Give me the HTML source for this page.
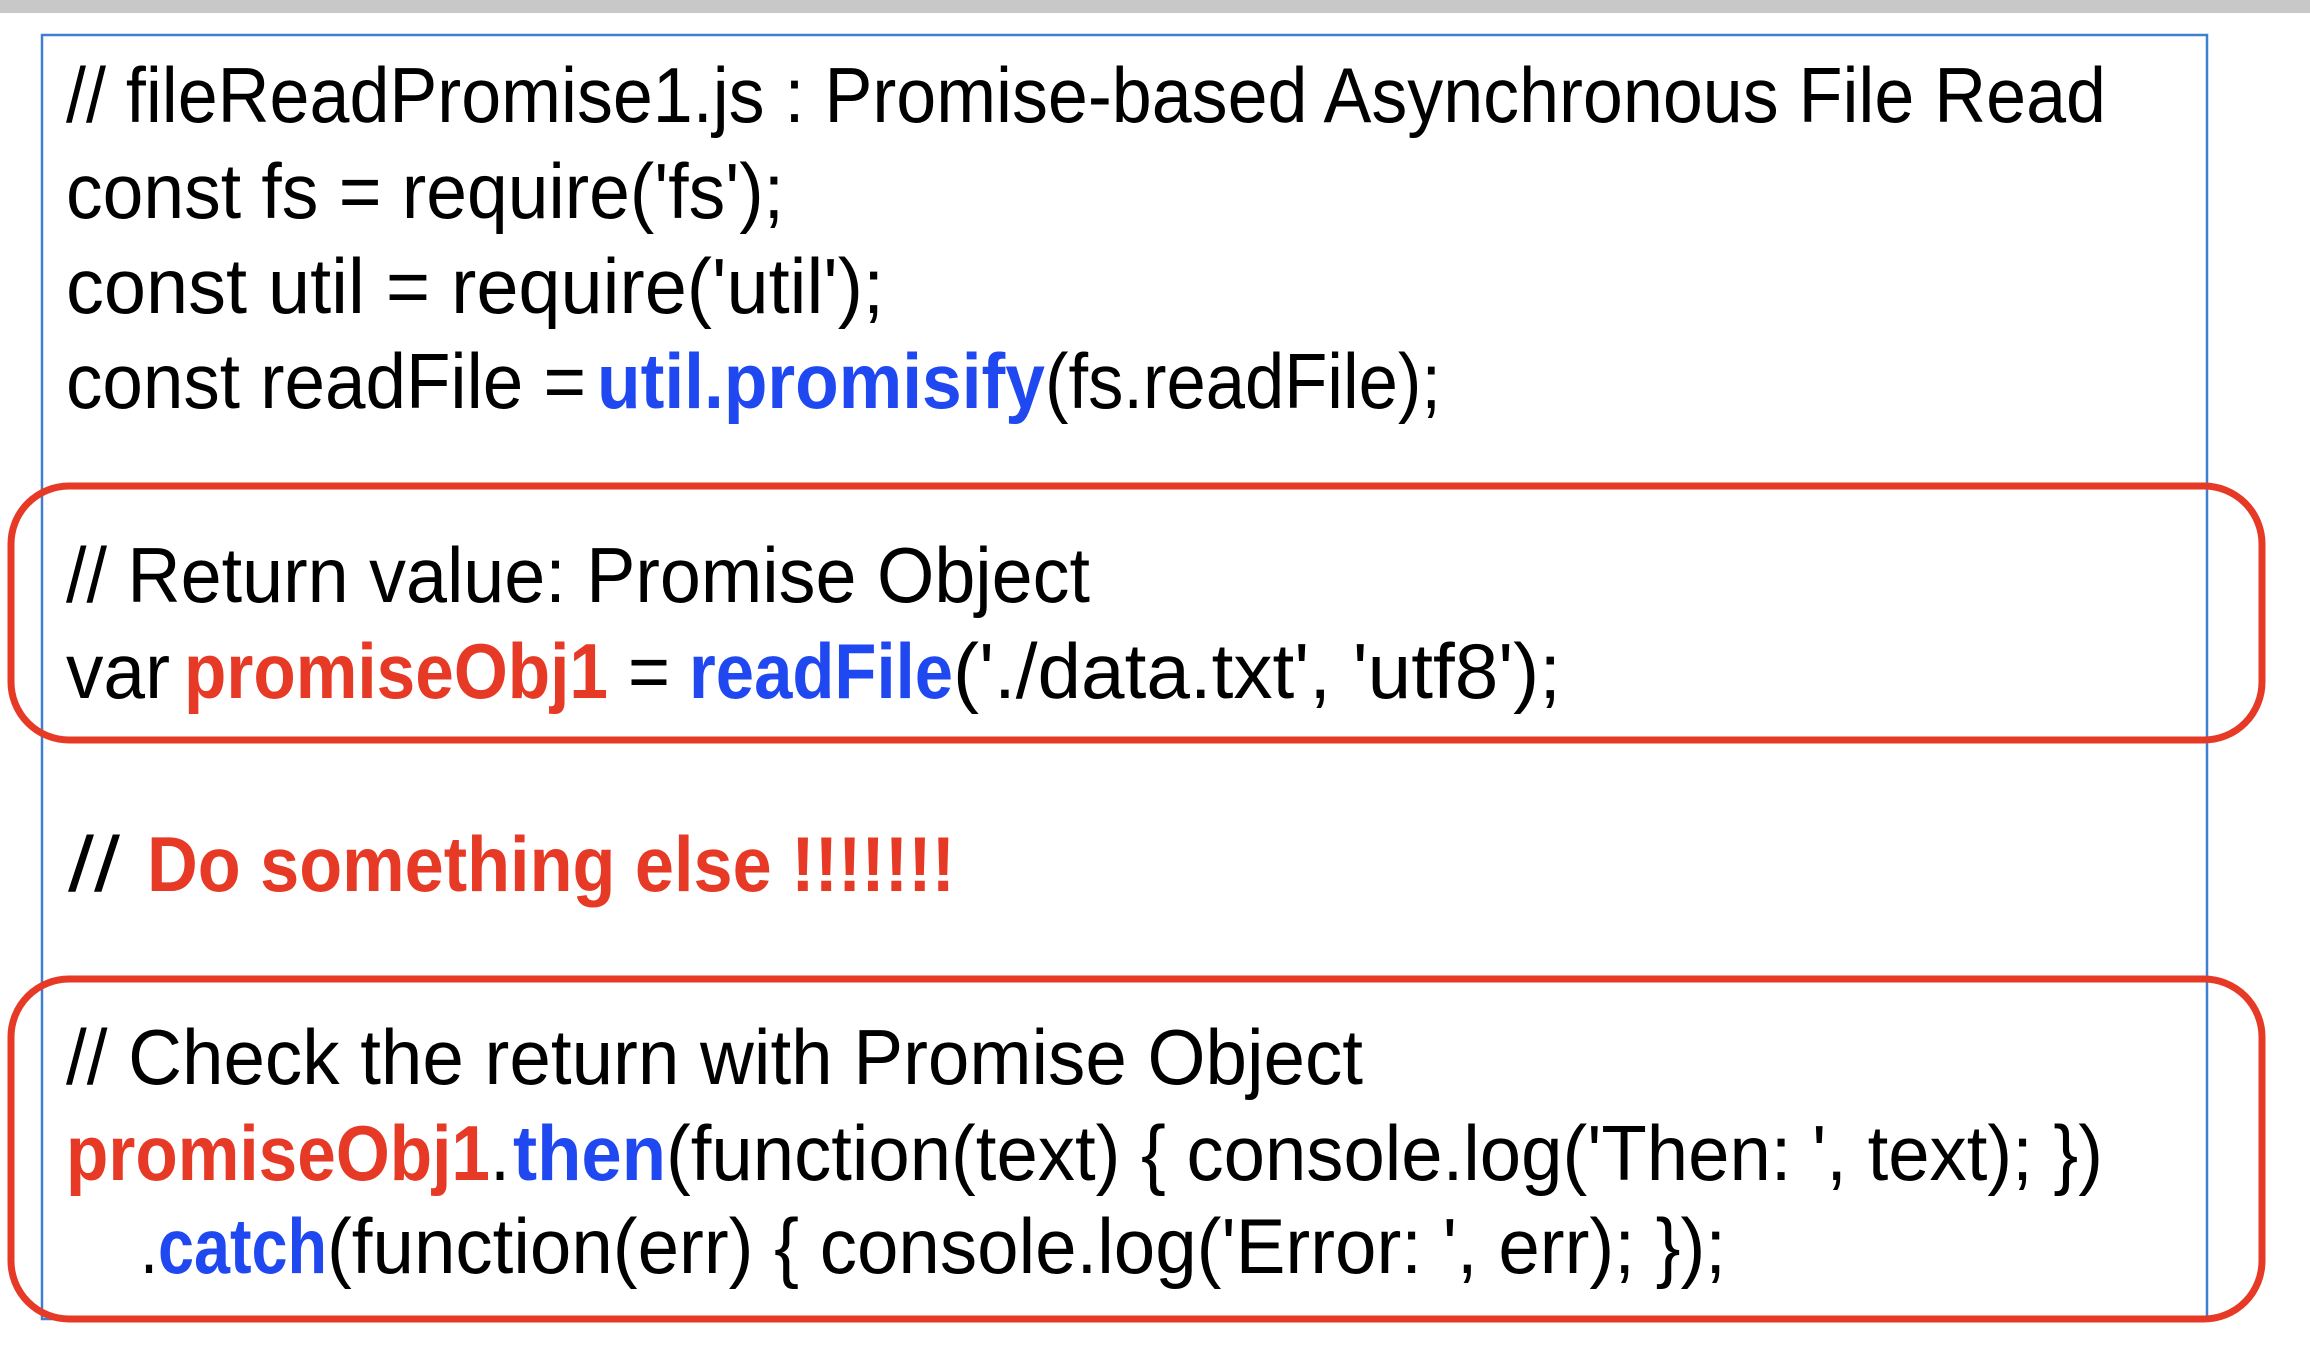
<!DOCTYPE html>
<html><head><meta charset="utf-8"><style>
html,body{margin:0;padding:0;background:#fff;width:2310px;height:1352px;overflow:hidden}
svg{display:block}
text{font-family:"Liberation Sans",sans-serif;font-size:78px;fill:#000}
.b{fill:#1f48f0;font-weight:bold}
.r{fill:#e63a26;font-weight:bold}
</style></head><body>
<svg width="2310" height="1352" viewBox="0 0 2310 1352" xmlns="http://www.w3.org/2000/svg">
<rect x="0" y="0" width="2310" height="13" fill="#c8c8c8"/>
<rect x="42" y="35" width="2165" height="1284" fill="none" stroke="#3d7fd0" stroke-width="2.5"/>
<rect x="11" y="486" width="2251" height="254" rx="58" ry="58" fill="none" stroke="#e63a26" stroke-width="7"/>
<rect x="11" y="979" width="2251" height="340" rx="58" ry="58" fill="none" stroke="#e63a26" stroke-width="7"/>

<text x="66" y="122" textLength="2040" lengthAdjust="spacingAndGlyphs">// fileReadPromise1.js : Promise-based Asynchronous File Read</text>
<text x="66" y="218" textLength="718" lengthAdjust="spacingAndGlyphs">const fs = require('fs');</text>
<text x="66" y="313" textLength="818" lengthAdjust="spacingAndGlyphs">const util = require('util');</text>
<text x="66" y="408" textLength="520" lengthAdjust="spacingAndGlyphs">const readFile = </text>
<text class="b" x="597" y="408" textLength="448" lengthAdjust="spacingAndGlyphs">util.promisify</text>
<text x="1045" y="408" textLength="396" lengthAdjust="spacingAndGlyphs">(fs.readFile);</text>

<text x="66" y="602" textLength="1024" lengthAdjust="spacingAndGlyphs">// Return value: Promise Object</text>
<text x="66" y="698" textLength="104" lengthAdjust="spacingAndGlyphs">var</text>
<text class="r" x="184" y="698" textLength="424" lengthAdjust="spacingAndGlyphs">promiseObj1</text>
<text x="628" y="698" textLength="42" lengthAdjust="spacingAndGlyphs">=</text>
<text class="b" x="689" y="698" textLength="264" lengthAdjust="spacingAndGlyphs">readFile</text>
<text x="953" y="698" textLength="608" lengthAdjust="spacingAndGlyphs">('./data.txt', 'utf8');</text>

<text x="68" y="891" textLength="52" lengthAdjust="spacingAndGlyphs">//</text>
<text class="r" x="147" y="891" textLength="808" lengthAdjust="spacingAndGlyphs">Do something else !!!!!!!</text>

<text x="66" y="1084" textLength="1297" lengthAdjust="spacingAndGlyphs">// Check the return with Promise Object</text>
<text class="r" x="66" y="1180" textLength="424" lengthAdjust="spacingAndGlyphs">promiseObj1</text>
<text x="490" y="1180" textLength="20" lengthAdjust="spacingAndGlyphs">.</text>
<text class="b" x="513" y="1180" textLength="153" lengthAdjust="spacingAndGlyphs">then</text>
<text x="666" y="1180" textLength="1437" lengthAdjust="spacingAndGlyphs">(function(text) { console.log('Then: ', text); })</text>
<text x="140" y="1273" textLength="18" lengthAdjust="spacingAndGlyphs">.</text>
<text class="b" x="158" y="1273" textLength="169" lengthAdjust="spacingAndGlyphs">catch</text>
<text x="327" y="1273" textLength="1399" lengthAdjust="spacingAndGlyphs">(function(err) { console.log('Error: ', err); });</text>
</svg>
</body></html>
